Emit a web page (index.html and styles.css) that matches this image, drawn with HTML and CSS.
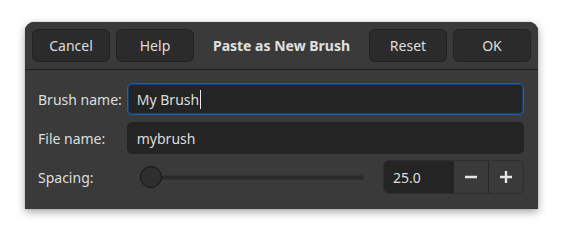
FILE: index.html
```html
<!DOCTYPE html>
<html lang="en">
<head>
    <meta charset="UTF-8">
    <title>Paste as New Brush</title>
    <link rel="stylesheet" href="styles.css">
</head>
<body>
    <div class="dialog">
        <div class="headerbar">
            <button class="btn">Cancel</button>
            <button class="btn">Help</button>
            <div class="title">Paste as New Brush</div>
            <button class="btn">Reset</button>
            <button class="btn">OK</button>
        </div>
        <div class="content">
            <label class="label">Brush name:</label>
            <div class="entry focused">My Brush<span class="caret"></span></div>

            <label class="label">File name:</label>
            <div class="entry">mybrush</div>

            <label class="label">Spacing:</label>
            <div class="spacing-row">
                <div class="slider">
                    <div class="track"></div>
                    <div class="thumb"></div>
                </div>
                <div class="spin">
                    <div class="spin-value">25.0</div>
                    <div class="spin-btn">
                        <svg width="14" height="14" viewBox="0 0 14 14"><path d="M1 7h12" stroke="#e6e6e6" stroke-width="2.4"/></svg>
                    </div>
                    <div class="spin-btn">
                        <svg width="14" height="14" viewBox="0 0 14 14"><path d="M1 7h12M7 1v12" stroke="#e6e6e6" stroke-width="2.4"/></svg>
                    </div>
                </div>
            </div>
        </div>
    </div>
</body>
</html>
```

FILE: styles.css
```css
body {
    margin: 0;
    padding: 22px 25px;
    background-color: #ffffff;
    font-family: "Noto Sans", "Open Sans", sans-serif;
    font-size: 14px;
    color: #dedede;
}
.dialog {
    width: 513px;
    height: 187px;
    background-color: #3a3a3a;
    border-radius: 9px 9px 0 0;
    box-shadow: 0 3px 9px rgba(0,0,0,0.35), 0 0 1px rgba(0,0,0,0.5);
    overflow: hidden;
}
.headerbar {
    display: flex;
    align-items: center;
    gap: 6px;
    height: 48px;
    padding: 0 7px;
    background-color: #3a3a3a;
    border-bottom: 1px solid #1e1e1e;
    box-sizing: border-box;
}
.btn {
    width: 78px;
    height: 33px;
    margin-top: -1px;
    background-color: #2b2b2b;
    border: 1px solid #222222;
    border-radius: 6px;
    color: #dedede;
    font-family: inherit;
    font-size: 14px;
    padding: 0;
}
.title {
    flex: 1;
    text-align: center;
    font-weight: bold;
    color: #e0e0e0;
}
.content {
    display: grid;
    grid-template-columns: auto 1fr;
    column-gap: 5px;
    row-gap: 7px;
    align-items: center;
    padding: 13px 14px 13px 13px;
}
.entry {
    height: 32px;
    box-sizing: border-box;
    padding: 0 9px;
    display: flex;
    align-items: center;
    background-color: #242424;
    border: 1px solid #242424;
    border-radius: 5px;
    color: #dedede;
}
.entry.focused {
    border: 1px solid #1d5fab;
    box-shadow: inset 0 0 0 1px #173f6e;
}
.caret {
    display: inline-block;
    width: 1px;
    height: 19px;
    margin-left: 1px;
    background-color: #e8e8e8;
}
.spacing-row {
    display: flex;
    align-items: center;
    gap: 19px;
    margin-top: -1px;
}
.slider {
    flex: 1;
    position: relative;
    height: 22px;
    display: flex;
    align-items: center;
    margin-left: 13px;
}
.track {
    width: 100%;
    height: 3px;
    background-color: #2a2a2a;
    border: 1px solid #303030;
    border-radius: 2px;
}
.thumb {
    position: absolute;
    left: 0;
    top: 0;
    width: 20px;
    height: 20px;
    border-radius: 50%;
    background-color: #2e2e2e;
    border: 1px solid #141414;
}
.spin {
    display: flex;
    width: 141px;
    height: 34px;
    box-sizing: border-box;
    border: 1px solid #2e2e2e;
    border-radius: 6px;
    overflow: hidden;
}
.spin-value {
    width: 70px;
    display: flex;
    align-items: center;
    padding-left: 9px;
    box-sizing: border-box;
    background-color: #242424;
}
.spin-btn {
    width: 35px;
    display: flex;
    align-items: center;
    justify-content: center;
    background-color: #3a3a3a;
    border-left: 1px solid #262626;
}
```
